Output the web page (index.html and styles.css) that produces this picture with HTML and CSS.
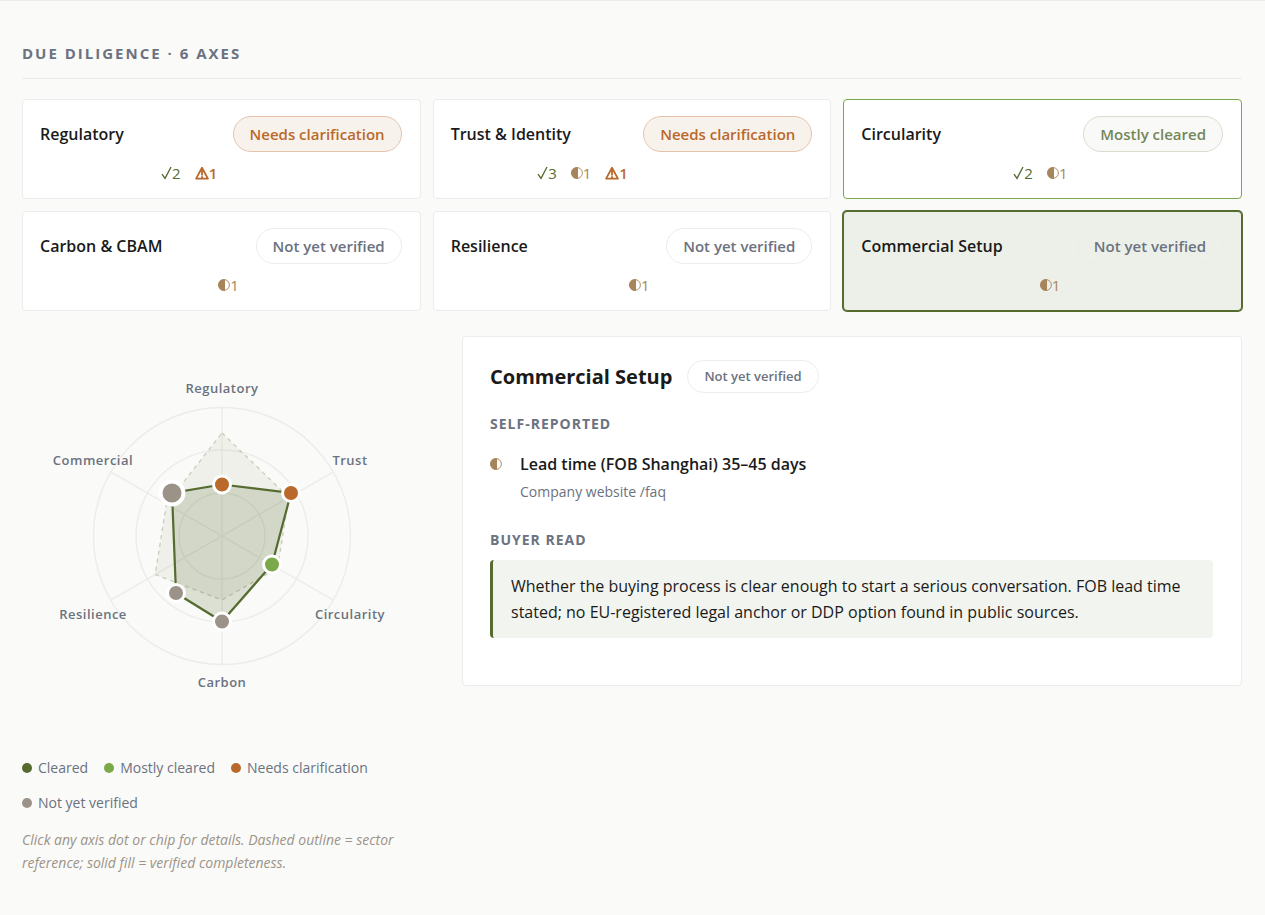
FILE: index.html
```
<!DOCTYPE html>
<html lang="en">
<head>
    <meta charset="UTF-8">
    <meta name="viewport" content="width=device-width, initial-scale=1.0">
    <title>Due diligence</title>
    <link rel="stylesheet" href="styles.css">
</head>
<body>
    <!-- Shared icons -->
    <svg class="sprite" aria-hidden="true">
        <symbol id="check" viewBox="0 0 11 14">
            <path d="M1 8.2 L4 12.4 L10 1" fill="none" stroke="currentColor" stroke-width="1.3"/>
        </symbol>
        <symbol id="half" viewBox="0 0 12 14">
            <circle cx="6" cy="7" r="5.4" fill="none" stroke="currentColor" stroke-width="0.9"/>
            <path d="M7 1.3 A5.8 5.8 0 1 0 7 12.7 Z" fill="currentColor"/>
        </symbol>
        <symbol id="warn" viewBox="0 0 14 14">
            <path d="M7 1.8 L12.9 12.6 H1.1 Z" fill="none" stroke="currentColor" stroke-width="1.8" stroke-linejoin="round"/>
            <path d="M7 4 V9.4 M7 10.2 V12" stroke="currentColor" stroke-width="1.8"/>
        </symbol>
    </svg>

    <main class="page">
        <h2 class="section-title">Due diligence · 6 axes</h2>

        <div class="axes">
            <button type="button" class="axis">
                <span class="axis-head"><span class="axis-name">Regulatory</span><span class="pill pill-warn">Needs clarification</span></span>
                <span class="counts counts-warn">
                    <span class="count ok"><svg class="icon-check"><use href="#check"/></svg>2</span>
                    <span class="count alert"><svg class="icon-warn"><use href="#warn"/></svg>1</span>
                </span>
            </button>
            <button type="button" class="axis">
                <span class="axis-head"><span class="axis-name">Trust &amp; Identity</span><span class="pill pill-warn">Needs clarification</span></span>
                <span class="counts counts-warn">
                    <span class="count ok"><svg class="icon-check"><use href="#check"/></svg>3</span>
                    <span class="count self"><svg class="icon-half"><use href="#half"/></svg>1</span>
                    <span class="count alert"><svg class="icon-warn"><use href="#warn"/></svg>1</span>
                </span>
            </button>
            <button type="button" class="axis axis-mostly">
                <span class="axis-head"><span class="axis-name">Circularity</span><span class="pill pill-mostly">Mostly cleared</span></span>
                <span class="counts">
                    <span class="count ok"><svg class="icon-check"><use href="#check"/></svg>2</span>
                    <span class="count self"><svg class="icon-half"><use href="#half"/></svg>1</span>
                </span>
            </button>
            <button type="button" class="axis">
                <span class="axis-head"><span class="axis-name">Carbon &amp; CBAM</span><span class="pill">Not yet verified</span></span>
                <span class="counts counts-self">
                    <span class="count self"><svg class="icon-half"><use href="#half"/></svg>1</span>
                </span>
            </button>
            <button type="button" class="axis">
                <span class="axis-head"><span class="axis-name">Resilience</span><span class="pill">Not yet verified</span></span>
                <span class="counts counts-self">
                    <span class="count self"><svg class="icon-half"><use href="#half"/></svg>1</span>
                </span>
            </button>
            <button type="button" class="axis axis-active" aria-pressed="true">
                <span class="axis-head"><span class="axis-name">Commercial Setup</span><span class="pill">Not yet verified</span></span>
                <span class="counts counts-self">
                    <span class="count self"><svg class="icon-half"><use href="#half"/></svg>1</span>
                </span>
            </button>
        </div>

        <div class="columns">
            <div class="chart">
                <svg class="radar" viewBox="0 0 400 400" role="img" aria-label="Radar of the six axes">
                    <g class="grid">
                        <circle cx="200" cy="200" r="43"/>
                        <circle cx="200" cy="200" r="86"/>
                        <circle cx="200" cy="200" r="128.5"/>
                        <path d="M200 71.5 V328.5 M88.7 135.8 L311.3 264.2 M88.7 264.2 L311.3 135.8"/>
                    </g>
                    <polygon class="reference" points="200,97 266.8,161.4 255.6,232 200,264 133.2,238.6 144.4,168"/>
                    <polygon class="verified" points="200,148.5 269,157 250,228.5 200,285.5 154,257 150,157"/>
                    <g class="dots">
                        <circle class="warn" cx="200" cy="148.5" r="8.5"/>
                        <circle class="warn" cx="269" cy="157" r="8.5"/>
                        <circle class="mostly" cx="250" cy="228.5" r="8.5"/>
                        <circle class="none" cx="200" cy="285.5" r="8.5"/>
                        <circle class="none" cx="154" cy="257" r="8.5"/>
                        <circle class="none selected" cx="150" cy="157" r="11.5"/>
                    </g>
                    <g class="labels">
                        <text x="200" y="57">Regulatory</text>
                        <text x="328" y="129">Trust</text>
                        <text x="328" y="283">Circularity</text>
                        <text x="200" y="351">Carbon</text>
                        <text x="71" y="283">Resilience</text>
                        <text x="71" y="129">Commercial</text>
                    </g>
                </svg>
                <ul class="legend">
                    <li><i class="dot dot-cleared"></i>Cleared</li>
                    <li><i class="dot dot-mostly"></i>Mostly cleared</li>
                    <li><i class="dot dot-warn"></i>Needs clarification</li>
                    <li><i class="dot dot-none"></i>Not yet verified</li>
                </ul>
                <p class="hint">Click any axis dot or chip for details. Dashed outline = sector reference; solid fill = verified completeness.</p>
            </div>

            <section class="detail">
                <div class="detail-head">
                    <h3>Commercial Setup</h3>
                    <span class="pill pill-small">Not yet verified</span>
                </div>
                <h4>Self-reported</h4>
                <div class="claim">
                    <svg class="icon-half self"><use href="#half"/></svg>
                    <div>
                        <p class="claim-text">Lead time (FOB Shanghai) 35–45 days</p>
                        <p class="claim-source">Company website /faq</p>
                    </div>
                </div>
                <h4>Buyer read</h4>
                <p class="buyer-read">Whether the buying process is clear enough to start a serious conversation. FOB lead time stated; no EU-registered legal anchor or DDP option found in public sources.</p>
            </section>
        </div>
    </main>
</body>
</html>
```
FILE: styles.css
```
* {
    box-sizing: border-box;
}
body {
    margin: 0;
    background: #fafaf8;
    color: #1a1a1a;
    font-family: "Segoe UI", "Open Sans", "Noto Sans", sans-serif;
    font-size: 16px;
}
h2, h3, h4, p, ul {
    margin: 0;
    padding: 0;
}
.sprite {
    display: none;
}
.page {
    border-top: 1px solid #ececec;
    padding: 40px 23px 40px 22px;
}

/* Section heading */
.section-title {
    padding-bottom: 12px;
    margin-bottom: 20px;
    border-bottom: 1px solid #ececec;
    color: #6b7280;
    font-size: 15px;
    line-height: 25px;
    letter-spacing: 2px;
    text-transform: uppercase;
}

/* Axis cards */
.axes {
    display: grid;
    grid-template-columns: repeat(3, 1fr);
    gap: 12px;
}
.axis {
    display: flex;
    flex-direction: column;
    gap: 10px;
    padding: 16px 18px 14px 17px;
    border: 1px solid #ececec;
    border-radius: 4px;
    background: #fff;
    color: inherit;
    font: inherit;
    cursor: pointer;
}
.axis-mostly {
    border-color: #7ba848;
}
.axis-active {
    border-color: #556b2f;
    background: #edf0e9;
    box-shadow: 0 0 0 1px #556b2f;
}
.axis-head {
    display: flex;
    align-items: center;
    justify-content: space-between;
}
.axis-name {
    font-weight: 600;
}
.pill {
    padding: 5px 16px;
    border: 1px solid #ececec;
    border-radius: 18px;
    color: #6b7280;
    font-size: 15px;
    font-weight: 600;
    line-height: 24px;
}
.pill-warn {
    border-color: #e5c3ab;
    background: #f8f2ec;
    color: #b8692b;
}
.pill-mostly {
    border-color: #d9ddd0;
    background: #f9f9f7;
    color: #73875a;
}
.pill-small {
    font-size: 13px;
    line-height: 21px;
}
.counts {
    display: flex;
    justify-content: flex-end;
    gap: 14px;
    padding-right: 43%;
    font-size: 15px;
    line-height: 22px;
}
.counts-warn {
    padding-right: 51%;
}
.counts-self {
    padding-right: 45%;
}
.count {
    display: flex;
    align-items: center;
}
.ok {
    color: #556b2f;
}
.self {
    color: #a6855a;
}
.alert {
    color: #b8692b;
    font-weight: 600;
}
.icon-check {
    width: 11px;
    height: 14px;
}
.icon-half {
    width: 12px;
    height: 14px;
}
.icon-warn {
    width: 14px;
    height: 14px;
}

/* Radar and details */
.columns {
    display: grid;
    grid-template-columns: 400px 1fr;
    gap: 40px;
    align-items: start;
    margin-top: 25px;
}
.radar {
    display: block;
    width: 100%;
}
.grid {
    fill: none;
    stroke: #ececea;
    stroke-width: 1.4;
}
.reference {
    fill: #556b2f;
    fill-opacity: 0.07;
    stroke: #c9cdbd;
    stroke-width: 1.3;
    stroke-dasharray: 4 4;
}
.verified {
    fill: #556b2f;
    fill-opacity: 0.18;
    stroke: #556b2f;
    stroke-width: 2.2;
}
.dots {
    stroke: #fff;
    stroke-width: 3;
}
.dots .selected {
    stroke-width: 4;
}
.warn {
    fill: #b8692b;
}
.mostly {
    fill: #7ba848;
}
.none {
    fill: #9c9388;
}
.labels {
    fill: #6b7280;
    font-size: 13px;
    font-weight: 600;
    letter-spacing: 0.5px;
    text-anchor: middle;
}
.legend {
    display: flex;
    flex-wrap: wrap;
    gap: 13px 16px;
    margin-top: 21px;
    color: #6b7280;
    font-size: 14px;
    line-height: 22px;
    list-style: none;
}
.legend li {
    display: flex;
    align-items: center;
    gap: 6px;
}
.dot {
    width: 10px;
    height: 10px;
    border-radius: 50%;
}
.dot-cleared {
    background: #556b2f;
}
.dot-mostly {
    background: #7ba848;
}
.dot-warn {
    background: #b8692b;
}
.dot-none {
    background: #9c9388;
}
.hint {
    margin-top: 14px;
    color: #9c9388;
    font-size: 14px;
    font-style: italic;
    line-height: 23px;
}
.detail {
    min-height: 350px;
    padding: 23px 28px 47px 27px;
    border: 1px solid #ececec;
    border-radius: 4px;
    background: #fff;
}
.detail-head {
    display: flex;
    align-items: center;
    gap: 15px;
    margin-bottom: 20px;
}
.detail h3 {
    font-size: 20px;
    line-height: 30px;
}
.detail h4 {
    color: #6b7280;
    font-size: 14px;
    line-height: 22px;
    letter-spacing: 1px;
    text-transform: uppercase;
}
.claim {
    display: flex;
    gap: 18px;
    margin: 16px 0 24px;
}
.claim .icon-half {
    margin-top: 6px;
}
.claim-text {
    font-weight: 600;
    line-height: 27px;
}
.claim-source {
    color: #6b7280;
    font-size: 14px;
    line-height: 27px;
}
.buyer-read {
    margin-top: 9px;
    padding: 13px 18px;
    border-left: 3px solid #556b2f;
    border-radius: 4px;
    background: #f2f4ef;
    line-height: 26px;
}
```
